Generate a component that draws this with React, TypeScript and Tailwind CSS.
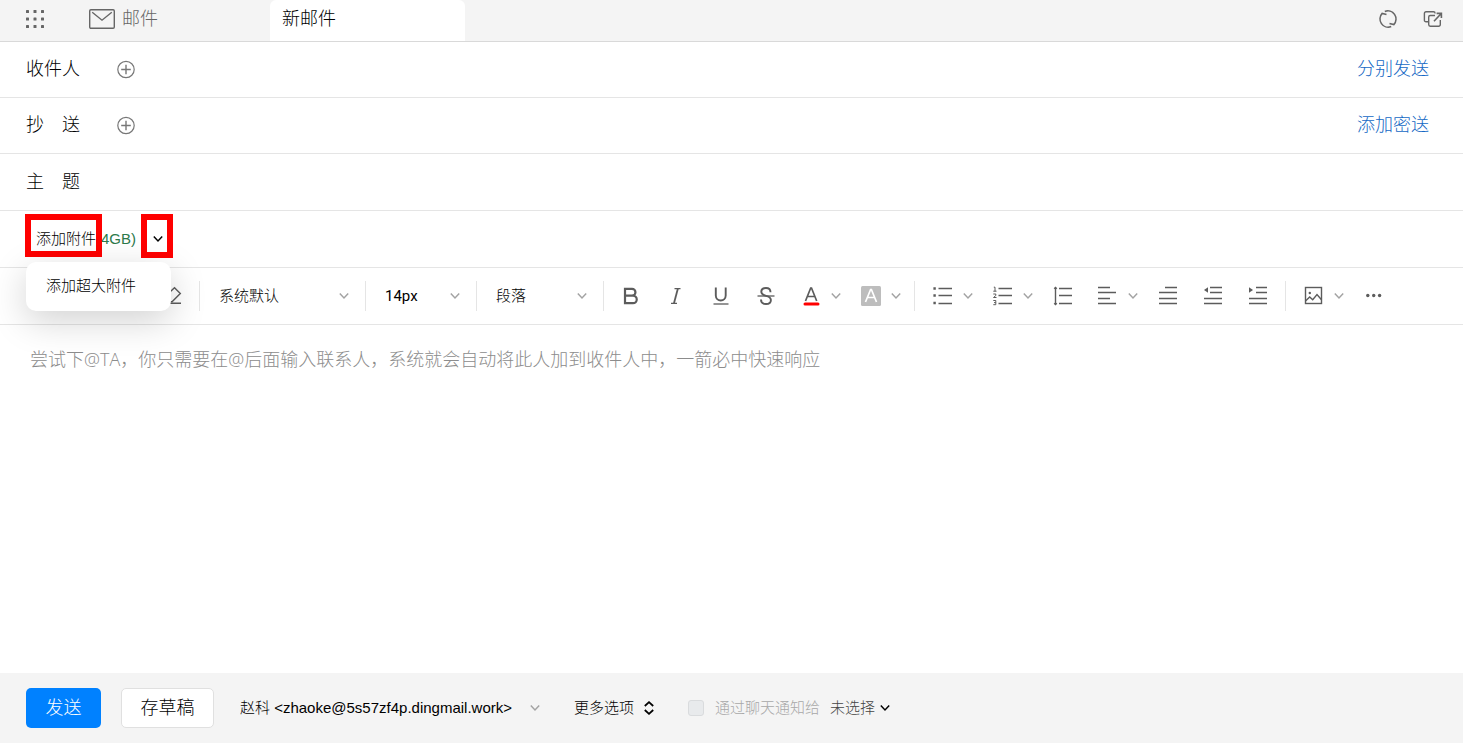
import { useState } from "react";
import type { ReactNode } from "react";

function Icon({ children, size = 20 }: { children: ReactNode; size?: number }) {
  return (
    <svg
      width={size}
      height={size}
      viewBox={`0 0 ${size} ${size}`}
      fill="none"
      stroke="currentColor"
      strokeWidth="1.4"
      className="shrink-0"
      aria-hidden="true"
    >
      {children}
    </svg>
  );
}

function Chevron({ className = "text-[#a3a3a3]" }: { className?: string }) {
  return (
    <svg
      width="10"
      height="10"
      viewBox="0 0 10 10"
      fill="none"
      stroke="currentColor"
      strokeWidth="1.5"
      className={`shrink-0 pointer-events-none ${className}`}
      aria-hidden="true"
    >
      <path d="M.8 2.6 5 6.9l4.2-4.3" />
    </svg>
  );
}

function Divider({ className = "" }: { className?: string }) {
  return <div className={`w-px h-[30px] bg-[#e5e5e5] shrink-0 ${className}`} />;
}

function Tool({ label, children }: { label: string; children: ReactNode }) {
  return (
    <button type="button" aria-label={label} className="w-[45px] h-10 shrink-0 flex items-center justify-center">
      {children}
    </button>
  );
}

// Tool button with a drop-down arrow next to it
function SplitTool({ label, children }: { label: string; children: ReactNode }) {
  return (
    <button type="button" aria-label={label} className="w-[60px] h-10 pl-[13px] gap-[10px] shrink-0 flex items-center">
      {children}
      <Chevron />
    </button>
  );
}

function ToolSelect({ label, value, className }: { label: string; value: string; className: string }) {
  return (
    <div className={`relative shrink-0 flex items-center ${className}`}>
      <select aria-label={label} className="w-full h-10 pl-[19px] pr-8 appearance-none bg-transparent text-[15px] text-black outline-none">
        <option>{value}</option>
      </select>
      <Chevron className="absolute right-4 text-[#a3a3a3]" />
    </div>
  );
}

function AddButton({ label }: { label: string }) {
  return (
    <button type="button" aria-label={label} className="w-5 h-5 text-[#777]">
      <Icon>
        <circle cx="10" cy="9.5" r="8.2" strokeWidth="1.2" />
        <path d="M10 4.7v9.6M5.2 9.5h9.6" />
      </Icon>
    </button>
  );
}

export default function App() {
  const [to, setTo] = useState("");
  const [cc, setCc] = useState("");
  const [subject, setSubject] = useState("");
  const [body, setBody] = useState("");

  return (
    <div className="min-h-screen flex flex-col bg-white text-black font-light font-['Liberation_Sans','Noto_Sans_CJK_SC',sans-serif]">
      {/* Header */}
      <header className="h-[42px] flex items-start bg-[#f4f4f4] border-b border-[#d9d9d9]">
        <div className="w-[270px] h-[38px] pl-[25px] flex items-center text-[#666]">
          <button type="button" aria-label="应用" className="mr-11">
            <svg width="20" height="20" viewBox="0 0 20 20" fill="currentColor" aria-hidden="true">
              {[1, 8.5, 16].map((y) =>
                [1, 8.5, 16].map((x) => <rect key={`${x}-${y}`} x={x} y={y} width="3" height="3" rx=".6" />)
              )}
            </svg>
          </button>
          <a href="#" className="flex items-center gap-[7px] text-[18px]">
            <svg width="26" height="22" viewBox="0 0 26 22" fill="none" stroke="currentColor" strokeWidth="1.4" aria-hidden="true">
              <rect x=".7" y="1.7" width="24.6" height="18.6" rx="1.2" />
              <path d="M3.2 4.2 13 12.2l9.8-8" />
            </svg>
            邮件
          </a>
        </div>
        <div className="w-[195px] h-[41px] pl-3 pb-[3px] flex items-center bg-white rounded-t-md text-[18px]">新邮件</div>
        <div className="ml-auto h-[38px] pr-5 flex items-center gap-[25px] text-[#666]">
          <button type="button" aria-label="刷新">
            <Icon>
              <path d="M6.8 2.4A8.2 8.2 0 0 1 15.8 15.600l-4.300-1.200" strokeWidth="1.600" />
              <path d="M13.200 17.600A8.200 8.200 0 0 1 4.200 4.400l4.300 1.200" strokeWidth="1.600" />
            </Icon>
          </button>
          <button type="button" aria-label="新窗口打开">
            <Icon>
              <path d="M5.500 12.800H3a1.600 1.600 0 0 1-1.600-1.600V4.400A1.600 1.600 0 0 1 3 2.800h7.500a1.600 1.600 0 0 1 1.600 1.600" />
              <path d="M12 6.500H7.300a1.600 1.600 0 0 0-1.600 1.600v7.500A1.600 1.600 0 0 0 7.300 17.200h8.400a1.600 1.600 0 0 0 1.600-1.600v-4.500" />
              <path d="m11 12.200 7-7.400M13.600 4.400h4.800v4.600" strokeWidth="1.600" />
            </Icon>
          </button>
        </div>
      </header>

      {/* Recipients */}
      <div className="h-14 pl-[26px] pr-[34px] flex items-center border-b border-[#e5e5e5] text-[18px]">
        <label htmlFor="to" className="w-[90px]">收件人</label>
        <AddButton label="添加收件人" />
        <input
          id="to"
          value={to}
          onChange={(e) => setTo(e.target.value)}
          className="flex-1 h-10 px-3 outline-none"
        />
        <a href="#" className="text-[#1468c4]">分别发送</a>
      </div>
      <div className="h-14 pl-[26px] pr-[34px] flex items-center border-b border-[#e5e5e5] text-[18px]">
        <label htmlFor="cc" className="w-[90px]">抄　送</label>
        <AddButton label="添加抄送人" />
        <input
          id="cc"
          value={cc}
          onChange={(e) => setCc(e.target.value)}
          className="flex-1 h-10 px-3 outline-none"
        />
        <a href="#" className="text-[#1468c4]">添加密送</a>
      </div>
      <div className="h-[57px] px-[26px] flex items-center border-b border-[#e5e5e5] text-[18px]">
        <label htmlFor="subject" className="w-[90px]">主　题</label>
        <input
          id="subject"
          value={subject}
          onChange={(e) => setSubject(e.target.value)}
          className="flex-1 h-10 outline-none"
        />
      </div>

      {/* Attachments */}
      <div className="relative h-[57px] pl-9 flex items-center border-b border-[#e5e5e5] text-[15px]">
        <button type="button">
          添加附件
          <span className="text-[#2c7a4b]">(4GB)</span>
        </button>
        <button type="button" aria-label="更多附件选项" className="ml-1 w-9 h-10 flex items-center justify-center">
          <Chevron className="text-black" />
        </button>
        <div className="absolute left-[25px] top-[3px] w-[77px] h-[43px] border-[6px] border-[#f00] pointer-events-none" />
        <div className="absolute left-[141px] top-[3px] w-8 h-11 border-[6px] border-[#f00] pointer-events-none" />
        <div className="absolute left-[26px] top-[51px] z-10 w-[145px] h-[49px] flex items-center bg-white rounded-[10px] shadow-[0_10px_36px_rgba(0,0,0,0.18)]">
          <button type="button" className="w-full pl-5 text-left">添加超大附件</button>
        </div>
      </div>

      {/* Toolbar */}
      <div className="h-[57px] pl-[149px] flex items-center border-b border-[#e5e5e5] text-[#5c5c5c]">
        <Tool label="清除格式">
          <Icon>
            <path d="M2.5 11 12.5 1.800l5.800 5.800-8 8H6.500l-4-4zM7 17.300h12" />
          </Icon>
        </Tool>
        <Divider className="ml-[5px]" />
        <ToolSelect label="字体" value="系统默认" className="w-[165px]" />
        <Divider />
        <ToolSelect label="字号" value="14px" className="w-[110px] font-normal font-['Roboto']" />
        <Divider />
        <ToolSelect label="段落格式" value="段落" className="w-[126px]" />
        <Divider className="mr-1" />
        <Tool label="粗体">
          <Icon>
            <path d="M4 2.800h7a3.300 3.300 0 0 1 0 6.900H4zM4 9.700h8a3.700 3.700 0 0 1 0 7.500H4z" strokeWidth="2.200" />
          </Icon>
        </Tool>
        <Tool label="斜体">
          <Icon>
            <path d="M8.500 2.600h6M5 17.400h6" strokeWidth="1.200" />
            <path d="m11.900 2.600-4 14.800" strokeWidth="1.800" />
          </Icon>
        </Tool>
        <Tool label="下划线">
          <Icon>
            <path d="M4.800 1.500v8a4.700 4.700 0 0 0 9.900 0v-8" strokeWidth="1.900" />
            <path d="M2.500 18h15" strokeWidth="1.300" />
          </Icon>
        </Tool>
        <Tool label="删除线">
          <Icon>
            <path d="M14.500 6.200C14.500 3.500 12.700 2 10 2S5.300 3.400 5.300 5.800c0 2 1.400 3.100 4.700 4 3.400.9 4.900 1.900 4.900 4.100 0 2.500-2 4.100-4.900 4.100-3 0-5-1.600-5-4.500" strokeWidth="1.900" />
            <path d="M1.500 10h17" strokeWidth="1.300" />
          </Icon>
        </Tool>
        <SplitTool label="文字颜色">
          <Icon>
            <path d="m4.500 15 5.200-13h.8l5.200 13M6.300 10.500h7.600" strokeWidth="1.700" />
            <path d="M4 18h13" stroke="#f00" strokeWidth="3" strokeLinecap="round" />
          </Icon>
        </SplitTool>
        <SplitTool label="背景颜色">
          <Icon>
            <rect width="20" height="20" rx="1.500" fill="#bdbdbd" stroke="none" />
            <path d="m4.500 16 5.100-12.500h.8L15.500 16M6.300 11.500h7.400" stroke="#fff" strokeWidth="1.700" />
          </Icon>
        </SplitTool>
        <Divider className="ml-1.5 mr-[5px]" />
        <SplitTool label="无序列表">
          <Icon>
            <path d="M5.500 2.500H19M5.500 9.500H19M5.500 17.500H19" />
            <path d="M.4 2.500h2.400M.4 9.500h2.400M.4 17h2.400" strokeWidth="2.400" />
          </Icon>
        </SplitTool>
        <SplitTool label="有序列表">
          <Icon>
            <path d="M5.500 2.500H19M5.500 9.500H19M5.500 17.500H19" />
            <path d="M.8 1.200H2v4M.3 5.200h3.200M.3 8h2.500v1.500L.5 11.500h3M.3 14.500h2.500v4.200H.3M1 16.600h1.800" strokeWidth="1" />
          </Icon>
        </SplitTool>
        <Tool label="行高">
          <Icon>
            <path d="M6 2.500h13M6 9.500h13M6 17.500h13M2.500 2v16M1.200 2.800l1.300-1.300 1.300 1.300M1.200 17.200l1.300 1.300 1.300-1.300" />
          </Icon>
        </Tool>
        <SplitTool label="对齐方式">
          <Icon>
            <path d="M0 1.500h12M0 6.500h18M0 12.500h12M0 17.500h18" />
          </Icon>
        </SplitTool>
        <Tool label="首行缩进">
          <Icon>
            <path d="M7 1.500h12M1 6.500h18M1 12.500h18M1 17.500h18" />
          </Icon>
        </Tool>
        <Tool label="减少缩进">
          <Icon>
            <path d="M7 1.500h12M7 6.500h12M1 12.500h18M1 17.500h18" />
            <path d="m1 4 4-2.700v5.400z" fill="currentColor" stroke="none" />
          </Icon>
        </Tool>
        <Tool label="增加缩进">
          <Icon>
            <path d="M8 1.500h11M8 6.500h11M1 12.500h18M1 17.500h18" />
            <path d="M5 4 1 1.300v5.400z" fill="currentColor" stroke="none" />
          </Icon>
        </Tool>
        <Divider className="mx-[5px]" />
        <SplitTool label="插入图片">
          <Icon>
            <rect x="1.500" y="1.500" width="16" height="16" />
            <path d="m1.500 15 4.200-4 3 2.800L13 8.500l4.500 5.200" />
            <circle cx="5.800" cy="7" r="1.200" fill="currentColor" stroke="none" />
          </Icon>
        </SplitTool>
        <Tool label="更多">
          <svg width="20" height="20" viewBox="0 0 20 20" fill="currentColor" aria-hidden="true">
            <circle cx="3.800" cy="9.500" r="1.700" />
            <circle cx="9.700" cy="9.500" r="1.700" />
            <circle cx="15.600" cy="9.500" r="1.700" />
          </svg>
        </Tool>
      </div>

      {/* Message */}
      <textarea
        aria-label="正文"
        value={body}
        onChange={(e) => setBody(e.target.value)}
        placeholder="尝试下@TA，你只需要在@后面输入联系人，系统就会自动将此人加到收件人中，一箭必中快速响应"
        className="flex-1 w-full px-[30px] pt-5 text-[18px] leading-7 resize-none outline-none placeholder:text-[#8c8c8c] font-['Open_Sans','Noto_Sans_CJK_SC',sans-serif]"
      />

      {/* Footer */}
      <footer className="h-[70px] pl-[26px] flex items-center bg-[#f4f4f4] text-[15px]">
        <button type="button" className="w-[75px] h-10 bg-[#0081ff] text-white text-[18px] rounded-[5px]">发送</button>
        <button type="button" className="ml-5 w-[93px] h-10 bg-white border border-[#e0e0e0] text-[18px] rounded-[5px]">存草稿</button>
        <div className="relative ml-[26px] w-[300px] flex items-center">
          <select aria-label="发件人" className="w-full h-10 appearance-none bg-transparent outline-none">
            <option>赵科 &lt;zhaoke@5s57zf4p.dingmail.work&gt;</option>
          </select>
          <Chevron className="absolute right-0 text-[#a3a3a3]" />
        </div>
        <button type="button" className="ml-[34px] flex items-center gap-[10px]">
          更多选项
          <svg width="10" height="14" viewBox="0 0 10 14" fill="none" stroke="currentColor" strokeWidth="1.800" aria-hidden="true">
            <path d="M.8 5 5 1.200 9.200 5M.8 9 5 12.800 9.200 9" />
          </svg>
        </button>
        <label className="ml-[34px] flex items-center gap-[11px] text-[#a8a8a8]">
          <input type="checkbox" disabled className="w-4 h-4 appearance-none rounded-[3px] bg-[#e8eaec] border border-[#d9dbdd]" />
          通过聊天通知给
        </label>
        <button type="button" className="ml-[10px] flex items-center gap-[5px] text-[#444]">
          未选择
          <Chevron className="text-black" />
        </button>
      </footer>
    </div>
  );
}
